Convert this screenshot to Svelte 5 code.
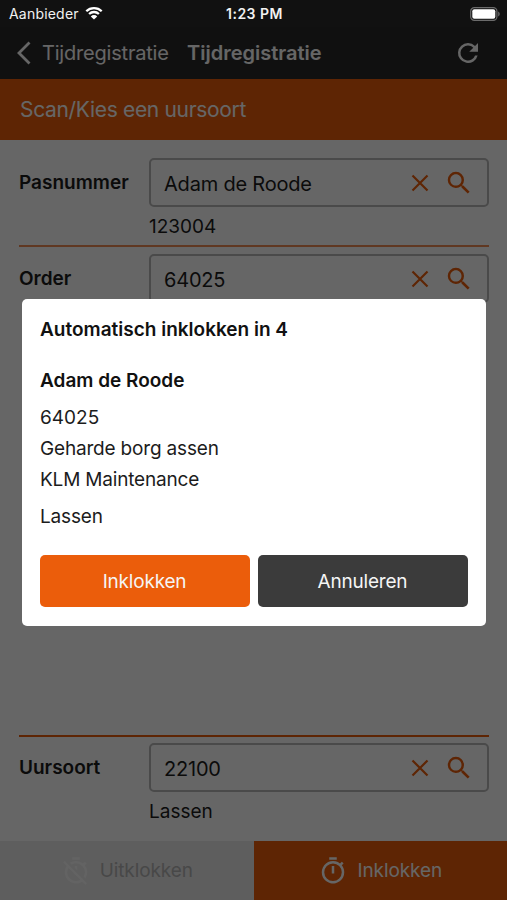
<script lang="ts">
interface Field {
	label: string;
	value: string;
	description?: string;
}

const pass: Field = { label: "Pasnummer", value: "Adam de Roode", description: "123004" };
const order: Field = { label: "Order", value: "64025" };
const hourType: Field = { label: "Uursoort", value: "22100", description: "Lassen" };

let seconds = $state(4);
let open = $state(true);

function close() {
	open = false;
}
</script>

{#snippet fieldRow(field: Field)}
	<div class="field">
		<span class="label">{field.label}</span>
		<div class="control">
			<div class="input">
				<span class="value">{field.value}</span>
				<svg class="clear" viewBox="0 0 18 18" aria-hidden="true">
					<path d="M1.5 1.5l15 15m0-15l-15 15" />
				</svg>
				<svg class="icon" viewBox="0 0 24 24" aria-hidden="true">
					<path d="M15.5 14h-.79l-.28-.27A6.47 6.47 0 0 0 16 9.5 6.5 6.5 0 1 0 9.5 16c1.61 0 3.09-.59 4.23-1.57l.27.28v.79l5 4.99L20.49 19l-4.99-5zm-6 0C7.01 14 5 11.99 5 9.5S7.01 5 9.5 5 14 7.01 14 9.5 11.99 14 9.5 14z" />
				</svg>
			</div>
			{#if field.description}
				<span class="description">{field.description}</span>
			{/if}
		</div>
	</div>
{/snippet}

<div class="screen">
	<div class="status">
		<span class="carrier">
			<span class="carrier-name">Aanbieder</span>
			<svg class="wifi" viewBox="0 0 18 14" aria-hidden="true">
				<path d="M1.3 5.2a11 11 0 0 1 15.4 0M4.1 8a7 7 0 0 1 9.8 0" />
				<path class="dot" d="M9 13.6L5.8 10.4a4.6 4.6 0 0 1 6.4 0z" />
			</svg>
		</span>
		<span class="time">1:23 PM</span>
		<svg class="battery" viewBox="0 0 30 14" aria-hidden="true">
			<rect class="shell" x=".7" y=".7" width="26.2" height="12.6" rx="3.6" />
			<rect class="level" x="2.3" y="2.3" width="23" height="9.4" rx="2" />
			<path class="cap" d="M28.2 4.5c2 .8 2 4.2 0 5z" />
		</svg>
	</div>

	<header>
		<svg class="back" viewBox="0 0 14 24" aria-hidden="true">
			<path d="M12.5 1.5L2 12l10.5 10.5" />
		</svg>
		<span class="back-label">Tijdregistratie</span>
		<h1>Tijdregistratie</h1>
		<svg class="icon refresh" viewBox="0 0 24 24" aria-hidden="true">
			<path d="M17.65 6.35A7.96 7.96 0 0 0 12 4a8 8 0 1 0 7.73 10h-2.08A6 6 0 1 1 12 6c1.66 0 3.14.69 4.22 1.78L13 11h7V4l-2.35 2.35z" />
		</svg>
	</header>

	<div class="banner"><span>Scan/Kies een uursoort</span></div>

	<main>
		{@render fieldRow(pass)}
		<hr />
		{@render fieldRow(order)}
		<hr class="last" />
		{@render fieldRow(hourType)}
	</main>

	<footer>
		<button class="tab disabled" disabled>
			<svg class="icon" viewBox="0 0 24 24" aria-hidden="true">
				<path d="M19.04 4.55l-1.42 1.42a9.01 9.01 0 0 0-10.57-.49l1.46 1.46a7 7 0 0 1 9.55 9.55l1.46 1.46a9 9 0 0 0-.49-10.57l1.42-1.42-1.41-1.41zM15 1H9v2h6V1zm-4 8.44l2 2V8h-2v1.44zM3.02 4L1.75 5.27 4.5 8.03A9 9 0 0 0 16.98 20.5l2.5 2.5 1.27-1.27L3.02 4zM12 20a7 7 0 0 1-6.06-10.5l9.56 9.56A6.96 6.96 0 0 1 12 20z" />
			</svg>
			<span>Uitklokken</span>
		</button>
		<button class="tab active">
			<svg class="icon" viewBox="0 0 24 24" aria-hidden="true">
				<path d="M15 1H9v2h6V1zm-4 13h2V8h-2v6zm8.03-6.61l1.42-1.42c-.43-.51-.9-.99-1.41-1.41l-1.42 1.42A9 9 0 1 0 21 13c0-2.12-.74-4.07-1.97-5.61zM12 20a7 7 0 1 1 0-14 7 7 0 0 1 0 14z" />
			</svg>
			<span>Inklokken</span>
		</button>
	</footer>

	{#if open}
		<div class="backdrop">
			<div class="dialog" role="dialog" aria-labelledby="dialog-title">
				<h2 id="dialog-title">Automatisch inklokken in {seconds}</h2>
				<h3>{pass.value}</h3>
				<p class="number">{order.value}</p>
				<p>Geharde borg assen</p>
				<p>KLM Maintenance</p>
				<p class="type">{hourType.description}</p>
				<div class="actions">
					<button class="confirm" onclick={close}>Inklokken</button>
					<button class="cancel" onclick={close}>Annuleren</button>
				</div>
			</div>
		</div>
	{/if}
</div>

<style>
	:global(body) {
		margin: 0;
	}

	.screen {
		--orange: #eb5d0b;
		position: relative;
		display: flex;
		flex-direction: column;
		width: 507px;
		height: 900px;
		overflow: hidden;
		background: #fff;
		color: #1c1c1c;
		font-family: Inter, "Liberation Sans", sans-serif;
		font-size: 19px;
	}

	button {
		border: 0;
		padding: 0;
		font: inherit;
	}

	.icon {
		flex: none;
		width: 30px;
		height: 30px;
		fill: currentColor;
	}

	.status {
		/* system bar stays bright over the backdrop */
		position: relative;
		z-index: 2;
		display: grid;
		grid-template-columns: 1fr auto 1fr;
		align-items: center;
		box-sizing: border-box;
		height: 27px;
		padding: 0 7px 0 9px;
		background: #111;
		color: #f2f2f2;
		font-size: 14px;
	}

	.carrier {
		display: flex;
		align-items: center;
		gap: 6px;
		letter-spacing: 0.2px;
	}

	.wifi {
		width: 18px;
		height: 14px;
		margin-top: -1px;
		fill: none;
		stroke: #fff;
		stroke-width: 2.3;
	}

	.wifi .dot {
		fill: #fff;
		stroke: none;
	}

	.time {
		font-weight: 600;
		letter-spacing: 0.5px;
	}

	.battery {
		justify-self: end;
		width: 30px;
		height: 14px;
	}

	.shell {
		fill: none;
		stroke: #6b6b6b;
		stroke-width: 1.2;
	}

	.level {
		fill: #fff;
	}

	.cap {
		fill: #6b6b6b;
	}

	header {
		display: flex;
		align-items: center;
		box-sizing: border-box;
		height: 52px;
		padding: 0 24px 0 17px;
		background: #2a2a2a;
		color: #fff;
		font-size: 20px;
	}

	.back {
		width: 14px;
		height: 24px;
		margin-right: 11px;
		fill: none;
		stroke: currentColor;
		stroke-width: 2.8;
	}

	.back-label {
		width: 145px;
		letter-spacing: -0.2px;
	}

	h1 {
		flex: 1;
		margin: 0;
		font-size: 20px;
		font-weight: 600;
	}

	.banner {
		display: flex;
		align-items: center;
		height: 61px;
		padding-left: 20px;
		background: var(--orange);
		color: #fff;
		font-size: 21px;
		letter-spacing: -0.32px;
	}

	main {
		display: flex;
		flex: 1;
		flex-direction: column;
		padding: 18px 18px 0 19px;
	}

	.field {
		display: flex;
	}

	.label {
		width: 130px;
		line-height: 50px;
		font-weight: 600;
	}

	.control {
		flex: 1;
	}

	.input {
		display: flex;
		align-items: center;
		box-sizing: border-box;
		height: 49px;
		padding: 0 13px;
		border: 2px solid #b8b8b8;
		border-radius: 5px;
		font-size: 20px;
		letter-spacing: -0.2px;
	}

	.value {
		flex: 1;
		padding-top: 2px;
	}

	.input .icon {
		color: var(--orange);
	}

	.clear {
		width: 18px;
		height: 18px;
		margin-right: 15px;
		fill: none;
		stroke: var(--orange);
		stroke-width: 2.2;
	}

	.description {
		display: block;
		padding-top: 2px;
		line-height: 36px;
	}

	hr {
		width: 100%;
		height: 2px;
		margin: 0 0 7px;
		border: 0;
		background: #ef8c55;
	}

	hr.last {
		margin-top: auto;
		margin-bottom: 6px;
		background: var(--orange);
	}

	.field:last-child {
		height: 98px;
	}

	footer {
		display: flex;
		height: 59px;
	}

	.tab {
		display: flex;
		flex: 1;
		align-items: center;
		justify-content: center;
		gap: 9px;
		color: #fff;
		font-size: 19px;
		letter-spacing: -0.1px;
	}

	.disabled {
		background: #ebebeb;
		color: #b4b4b4;
	}

	.disabled .icon {
		color: #f8f8f8;
	}

	.active {
		background: var(--orange);
	}

	.backdrop {
		position: absolute;
		inset: 0;
		display: flex;
		align-items: center;
		justify-content: center;
		padding: 25px 0 0;
		background: rgba(0, 0, 0, 0.6);
	}

	.dialog {
		box-sizing: border-box;
		width: 464px;
		height: 327px;
		padding: 15px 18px 19px;
		border-radius: 5px;
		background: #fff;
	}

	.dialog h2,
	.dialog h3,
	.dialog p {
		margin: 0;
		padding-left: 0.5px;
		font-size: 19px;
		line-height: 31px;
	}

	.dialog h2,
	.dialog h3 {
		color: #111;
		font-weight: 600;
	}

	.dialog h3 {
		margin: 20px 0 6px;
	}

	.dialog p {
		letter-spacing: -0.18px;
	}

	.dialog .number {
		letter-spacing: 0;
	}

	.dialog .type {
		margin-top: 6px;
	}

	.actions {
		display: flex;
		gap: 8px;
		margin-top: 23px;
	}

	.actions button {
		flex: 1;
		height: 52px;
		border-radius: 5px;
		color: #f5f5f5;
		letter-spacing: -0.2px;
	}

	.actions .confirm {
		background: var(--orange);
	}

	.actions .cancel {
		background: #3b3b3b;
	}
</style>
